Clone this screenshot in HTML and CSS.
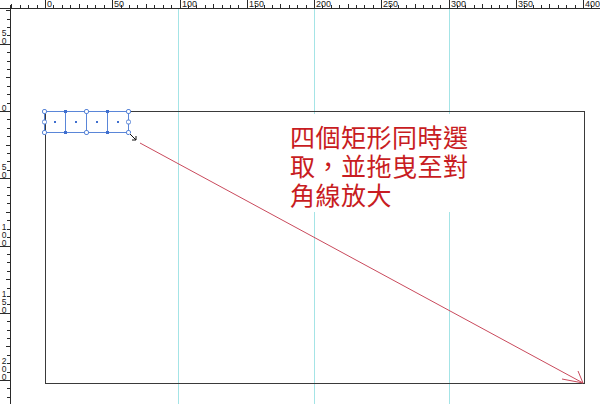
FILE: index.html
```html
<!DOCTYPE html>
<html>
	<head>
		<link rel="stylesheet" href="styles.css">
	</head>
	<body>
		<div class="workspace">
			<svg class="ruler ruler-top" id="ruler-top" viewBox="0 0 600 9" width="600" height="9">
				<line class="ruler-edge" x1="0" y1="8.5" x2="600" y2="8.5"></line>
				<line class="ruler-edge" x1="10.5" y1="5" x2="10.5" y2="9"></line>
			</svg>
			<svg class="ruler ruler-left" id="ruler-left" viewBox="0 9 11 395" width="11" height="395">
				<line class="ruler-edge" x1="10.5" y1="9" x2="10.5" y2="404"></line>
			</svg>

			<div class="canvas">
				<svg class="art" viewBox="11 9 589 395" width="589" height="395">
					<!-- guides at 100 / 200 / 300 -->
					<line class="guide" x1="178.5" y1="9" x2="178.5" y2="404"></line>
					<line class="guide" x1="314.5" y1="9" x2="314.5" y2="404"></line>
					<line class="guide" x1="449.5" y1="9" x2="449.5" y2="404"></line>

					<rect class="frame" x="45.5" y="111.5" width="539" height="272"></rect>

					<!-- drag direction -->
					<g class="arrow">
						<line x1="140" y1="143" x2="583" y2="383"></line>
						<line x1="583" y1="383" x2="578" y2="371"></line>
						<line x1="583" y1="383" x2="562" y2="379"></line>
					</g>

					<!-- four selected rectangles -->
					<g class="selection">
						<rect class="sel-box" x="44.5" y="111.5" width="84" height="21"></rect>
						<line class="sel-box" x1="65.5" y1="111.5" x2="65.5" y2="132.5"></line>
						<line class="sel-box" x1="86.5" y1="111.5" x2="86.5" y2="132.5"></line>
						<line class="sel-box" x1="107.5" y1="111.5" x2="107.5" y2="132.5"></line>

						<rect class="anchor" x="64" y="110" width="3" height="3"></rect>
						<rect class="anchor" x="106" y="110" width="3" height="3"></rect>
						<rect class="anchor" x="64" y="131" width="3" height="3"></rect>
						<rect class="anchor" x="106" y="131" width="3" height="3"></rect>

						<rect class="center" x="54" y="121" width="2" height="2"></rect>
						<rect class="center" x="75" y="121" width="2" height="2"></rect>
						<rect class="center" x="96" y="121" width="2" height="2"></rect>
						<rect class="center" x="117" y="121" width="2" height="2"></rect>

						<rect class="handle" x="42.5" y="109.5" width="4" height="4" rx="1.5"></rect>
						<rect class="handle" x="84.5" y="109.5" width="4" height="4" rx="1.5"></rect>
						<rect class="handle" x="126.5" y="109.5" width="4" height="4" rx="1.5"></rect>
						<rect class="handle" x="42.5" y="120" width="4" height="4" rx="1.5"></rect>
						<rect class="handle" x="126.5" y="120" width="4" height="4" rx="1.5"></rect>
						<rect class="handle" x="42.5" y="130.5" width="4" height="4" rx="1.5"></rect>
						<rect class="handle" x="84.5" y="130.5" width="4" height="4" rx="1.5"></rect>
						<rect class="handle" x="126.5" y="130.5" width="4" height="4" rx="1.5"></rect>
					</g>

					<!-- scale cursor -->
					<path class="cursor-halo" d="M130 134 L136 140 M136 136 L136 140 L132 140"></path>
					<path class="cursor" d="M130 134 L136 140 M136 136 L136 140 L132 140"></path>
				</svg>

				<div class="note">四個矩形同時選<br>取，並拖曳至對<br>角線放大</div>
			</div>
		</div>

		<script src="script.js"></script>
	</body>
</html>
```

FILE: styles.css
```css
body {
	margin: 0;
	background-color: #fff;
	overflow: hidden;
}

.workspace {
	display: grid;
	grid-template-columns: 11px 589px;
	grid-template-rows: 9px 395px;
	width: 600px;
	height: 404px;
}

.ruler {
	display: block;
	shape-rendering: crispEdges;
}
.ruler-top {
	grid-column: 1 / -1;
}
.ruler line,
.ruler-edge {
	stroke: #2a2a2a;
	stroke-width: 1;
}
.ruler text {
	font-family: "Liberation Sans", Arial, sans-serif;
	font-size: 9px;
	fill: #222;
}
.ruler-left text {
	font-size: 8.5px;
	writing-mode: vertical-rl;
	text-orientation: upright;
	letter-spacing: -2px;
}

.canvas {
	position: relative;
	overflow: hidden;
}
.art {
	display: block;
}

.guide {
	stroke: #a4e4e6;
	stroke-width: 1;
	shape-rendering: crispEdges;
}
.frame {
	fill: none;
	stroke: #3a3a3a;
	stroke-width: 1;
	shape-rendering: crispEdges;
}

.arrow line {
	stroke: #c94a5c;
	stroke-width: 1;
}

.sel-box {
	fill: none;
	stroke: #5a86d8;
	stroke-width: 1;
	shape-rendering: crispEdges;
}
.anchor,
.center {
	fill: #3f6fcf;
}
.handle {
	fill: #fff;
	stroke: #5a86d8;
	stroke-width: 1;
}

.cursor-halo {
	fill: none;
	stroke: #fff;
	stroke-width: 3;
}
.cursor {
	fill: none;
	stroke: #111;
	stroke-width: 1;
}

.note {
	position: absolute;
	left: 269px;
	top: 105px;
	width: 182px;
	height: 90px;
	padding: 8px 0 0 10px;
	background-color: #fff;
	color: #c81c22;
	font-family: "Noto Sans CJK TC", "Noto Sans CJK SC", sans-serif;
	font-size: 25px;
	line-height: 29px;
	letter-spacing: 0.5px;
	white-space: nowrap;
}
```

FILE: script.js
```js
const NS = "http://www.w3.org/2000/svg";
const STEP = 67.25 / 8;

function add(parent, tag, attrs, text) {
	let el = document.createElementNS(NS, tag);
	for (let k in attrs) el.setAttribute(k, attrs[k]);
	if (text !== undefined) el.textContent = text;
	parent.appendChild(el);
	return el;
}

// top ruler, origin at x = 45
let rulerTop = document.getElementById("ruler-top");
for (let i = -4; i <= 66; i++) {
	let x = Math.round(45 + i * STEP) + 0.5;
	if (x > 600) break;
	let major = i % 8 === 0;
	let len = major ? 9 : (i % 4 === 0 ? 4 : 3);
	add(rulerTop, "line", { x1: x, y1: 8 - len, x2: x, y2: 8 });
	if (major) add(rulerTop, "text", { x: x + 1.5, y: 7 }, String(i / 8 * 50));
}

// left ruler, origin at y = 111; labels run down, ending just above the tick
let rulerLeft = document.getElementById("ruler-left");
for (let i = -12; i <= 35; i++) {
	let y = Math.round(111 + i * STEP) + 0.5;
	if (y > 404) break;
	let major = i % 8 === 0;
	let len = major ? 11 : (i % 4 === 0 ? 4 : 3);
	add(rulerLeft, "line", { x1: 10 - len, y1: y, x2: 10, y2: y });
	if (major) {
		let label = String(Math.abs(i / 8 * 50));
		add(rulerLeft, "text", { x: 4, y: y - 1, "text-anchor": "end" }, label);
	}
}
```
